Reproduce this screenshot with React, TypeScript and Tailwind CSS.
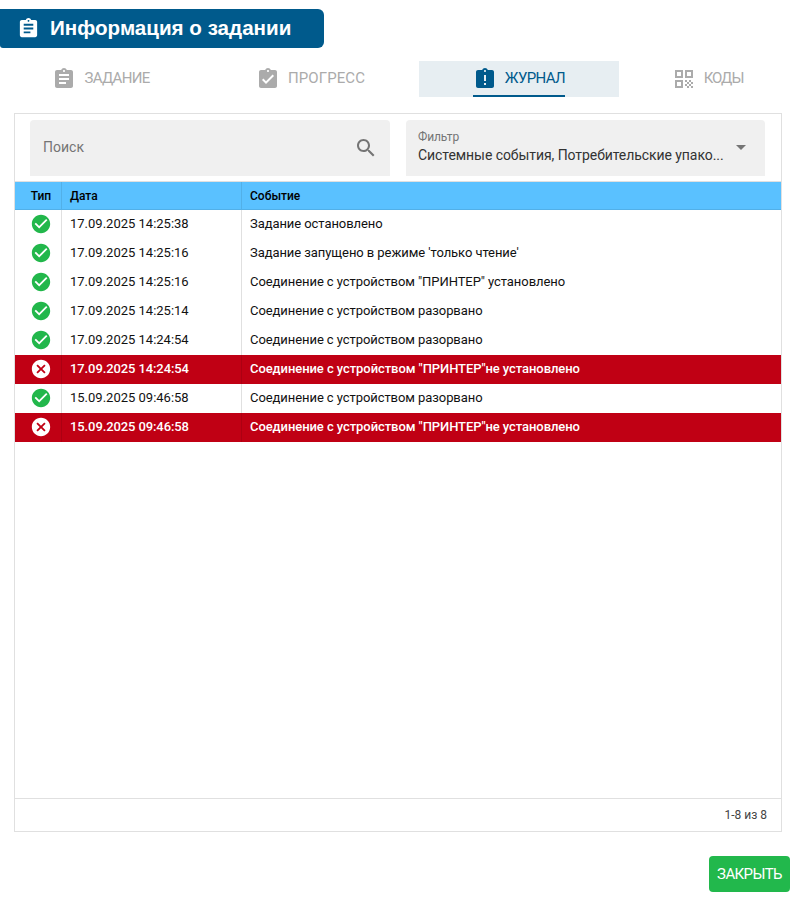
const P = {
  assignment: "M19 3h-4.18C14.4 1.84 13.3 1 12 1c-1.3 0-2.4.84-2.82 2H5c-1.1 0-2 .9-2 2v14c0 1.1.9 2 2 2h14c1.1 0 2-.9 2-2V5c0-1.1-.9-2-2-2zm-7 0c.55 0 1 .45 1 1s-.45 1-1 1-1-.45-1-1 .45-1 1-1zm2 14H7v-2h7v2zm3-4H7v-2h10v2zm0-4H7V7h10v2z",
  turned: "M19 3h-4.18C14.4 1.84 13.3 1 12 1c-1.3 0-2.4.84-2.82 2H5c-1.1 0-2 .9-2 2v14c0 1.1.9 2 2 2h14c1.1 0 2-.9 2-2V5c0-1.1-.9-2-2-2zm-7 0c.55 0 1 .45 1 1s-.45 1-1 1-1-.45-1-1 .45-1 1-1zm-2 14l-4-4 1.41-1.41L10 14.17l6.59-6.59L18 9l-8 8z",
  late: "M19 3h-4.18C14.4 1.84 13.3 1 12 1c-1.3 0-2.4.84-2.82 2H5c-1.1 0-2 .9-2 2v14c0 1.1.9 2 2 2h14c1.1 0 2-.9 2-2V5c0-1.1-.9-2-2-2zm-6 15h-2v-2h2v2zm0-4h-2V8h2v6zm-1-9c-.55 0-1-.45-1-1s.45-1 1-1 1 .45 1 1-.45 1-1 1z",
  qr: "M3 11h8V3H3v8zm2-6h4v4H5V5zM3 21h8v-8H3v8zm2-6h4v4H5v-4zM13 3v8h8V3h-8zm6 6h-4V5h4v4zM13 13h2v2h-2zM15 15h2v2h-2zM13 17h2v2h-2zM15 19h2v2h-2zM17 17h2v2h-2zM17 13h2v2h-2zM19 15h2v2h-2zM19 19h2v2h-2z",
  search: "M15.5 14h-.79l-.28-.27C15.41 12.59 16 11.11 16 9.5 16 5.91 13.09 3 9.5 3S3 5.91 3 9.5 5.91 16 9.5 16c1.61 0 3.09-.59 4.23-1.57l.27.28v.79l5 4.99L20.49 19l-4.99-5zm-6 0C7.01 14 5 11.99 5 9.5S7.01 5 9.5 5 14 7.01 14 9.5 11.99 14 9.5 14z",
  ok: "M12 2C6.48 2 2 6.48 2 12s4.48 10 10 10 10-4.48 10-10S17.52 2 12 2zm-2 15l-5-5 1.41-1.41L10 14.17l7.59-7.59L19 8l-9 9z",
  err: "M12 2C6.47 2 2 6.47 2 12s4.47 10 10 10 10-4.47 10-10S17.53 2 12 2zm5 13.59L15.59 17 12 13.41 8.41 17 7 15.59 10.59 12 7 8.41 8.41 7 12 10.59 15.59 7 17 8.41 13.41 12 17 15.59z",
};

function Icon({ d, className }: { d: string; className: string }) {
  return (
    <svg viewBox="0 0 24 24" className={className} fill="currentColor">
      <path d={d} />
    </svg>
  );
}

const rows = [
  { ok: true, date: "17.09.2025 14:25:38", text: "Задание остановлено" },
  { ok: true, date: "17.09.2025 14:25:16", text: "Задание запущено в режиме 'только чтение'" },
  { ok: true, date: "17.09.2025 14:25:16", text: 'Соединение с устройством "ПРИНТЕР" установлено' },
  { ok: true, date: "17.09.2025 14:25:14", text: "Соединение с устройством разорвано" },
  { ok: true, date: "17.09.2025 14:24:54", text: "Соединение с устройством разорвано" },
  { ok: false, date: "17.09.2025 14:24:54", text: 'Соединение с устройством "ПРИНТЕР"не установлено' },
  { ok: true, date: "15.09.2025 09:46:58", text: "Соединение с устройством разорвано" },
  { ok: false, date: "15.09.2025 09:46:58", text: 'Соединение с устройством "ПРИНТЕР"не установлено' },
];

function Tab({ d, label, w, track, active }: { d: string; label: string; w: string; track: string; active?: boolean }) {
  return (
    <div className={`${w} h-[36px] shrink-0 flex justify-center ${active ? "bg-[#e7eef2] text-[#005a8c]" : "text-[#ababab]"}`}>
      <div className={`h-full flex items-center gap-[8px] ${active ? "border-b-2 border-[#005a8c] pt-[2px]" : ""}`}>
        <Icon d={d} className="w-[24px] h-[24px]" />
        <span className={`text-[15px] leading-none -mt-[2px] ${track}`}>{label}</span>
      </div>
    </div>
  );
}

export default function App() {
  return (
    <div className="relative w-[796px] h-[899px] bg-white overflow-hidden text-[#111] font-['Roboto',sans-serif]">
      <div className="pt-[9px]">
        <div className="w-[324px] h-[39px] bg-[#005a8c] rounded-r-[6px] rounded-bl-[3px] flex items-center pl-[17px] text-white">
          <Icon d={P.assignment} className="w-[23px] h-[23px] mr-[10px]" />
          <span className="font-['Liberation_Sans',sans-serif] font-bold text-[20.6px] leading-none">Информация о задании</span>
        </div>
      </div>

      <div className="flex mt-[13px]">
        <Tab d={P.assignment} label="ЗАДАНИЕ" w="w-[202px]" track="tracking-[-0.7px]" />
        <Tab d={P.turned} label="ПРОГРЕСС" w="w-[217px]" track="tracking-[0.1px]" />
        <Tab d={P.late} label="ЖУРНАЛ" w="w-[200px]" track="tracking-[-0.6px]" active />
        <Tab d={P.qr} label="КОДЫ" w="w-[177px]" track="tracking-[-1px]" />
      </div>

      <div className="ml-[14px] mt-[16px] w-[768px] h-[719px] border border-[#e0e0e0] flex flex-col">
        <div className="flex gap-[16px] pl-[15px] pr-[16px] pt-[6px] pb-[5px] border-b border-[#e0e0e0]">
          <div className="w-[360px] h-[56px] bg-[#f0f0f0] rounded-t-[4px] flex items-center justify-between pl-[13px] pr-[12px] text-[#757575]">
            <span className="text-[14px] -mt-[2px]">Поиск</span>
            <Icon d={P.search} className="w-[24px] h-[24px]" />
          </div>
          <div className="w-[359px] h-[56px] bg-[#f0f0f0] rounded-t-[4px] flex items-center pl-[12px] pr-[12px]">
            <div className="flex-1 min-w-0">
              <div className="text-[12px] leading-[14px] text-[#757575] -translate-y-[1px] tracking-[-0.1px]">Фильтр</div>
              <div className="text-[14px] leading-[20px] text-[#333] whitespace-nowrap tracking-[-0.07px]">Системные события, Потребительские упако...</div>
            </div>
            <svg viewBox="0 0 24 24" className="w-[24px] h-[24px] text-[#757575] -mt-[2px]" fill="currentColor"><path d="M7 10l5 5 5-5z" /></svg>
          </div>
        </div>

        <div className="h-[28px] bg-[#5ac1ff] flex text-[12px] font-medium text-black border-b border-[#52b0e8]">
          <div className="w-[47px] flex items-center justify-center pl-[6px] border-r border-[#52b0e8]">Тип</div>
          <div className="w-[180px] flex items-center pl-[8px] border-r border-[#52b0e8]">Дата</div>
          <div className="flex items-center pl-[8px]">Событие</div>
        </div>

        <div className="flex-1">
          {rows.map((r, i) => (
            <div key={i} className={`h-[29px] flex text-[13px] ${r.ok ? "bg-white text-[#111]" : "bg-[#c00014] text-white font-medium"}`}>
              <div className={`w-[47px] flex items-center justify-center pl-[6px] pb-[2px] border-r ${r.ok ? "border-[#e0e0e0]" : "border-[#ac0012]"}`}>
                <Icon d={r.ok ? P.ok : P.err} className={`w-[22px] h-[22px] ${r.ok ? "text-[#22b74b]" : "text-white"}`} />
              </div>
              <div className={`w-[180px] flex items-center pl-[8px] pb-[2px] border-r ${r.ok ? "border-[#e0e0e0]" : "border-[#ac0012] tracking-[-0.1px]"}`}>{r.date}</div>
              <div className="flex items-center pl-[8px] pb-[2px] tracking-[-0.07px]">{r.text}</div>
            </div>
          ))}
        </div>

        <div className="h-[33px] border-t border-[#e0e0e0] flex items-center justify-end pr-[14px] text-[12px] text-[#444]">1-8 из 8</div>
      </div>

      <div className="flex justify-end pr-[6px] mt-[24px]">
        <button className="w-[81px] h-[36px] bg-[#22b84c] rounded-[4px] text-white text-[15px] tracking-[-0.6px]">ЗАКРЫТЬ</button>
      </div>
    </div>
  );
}
